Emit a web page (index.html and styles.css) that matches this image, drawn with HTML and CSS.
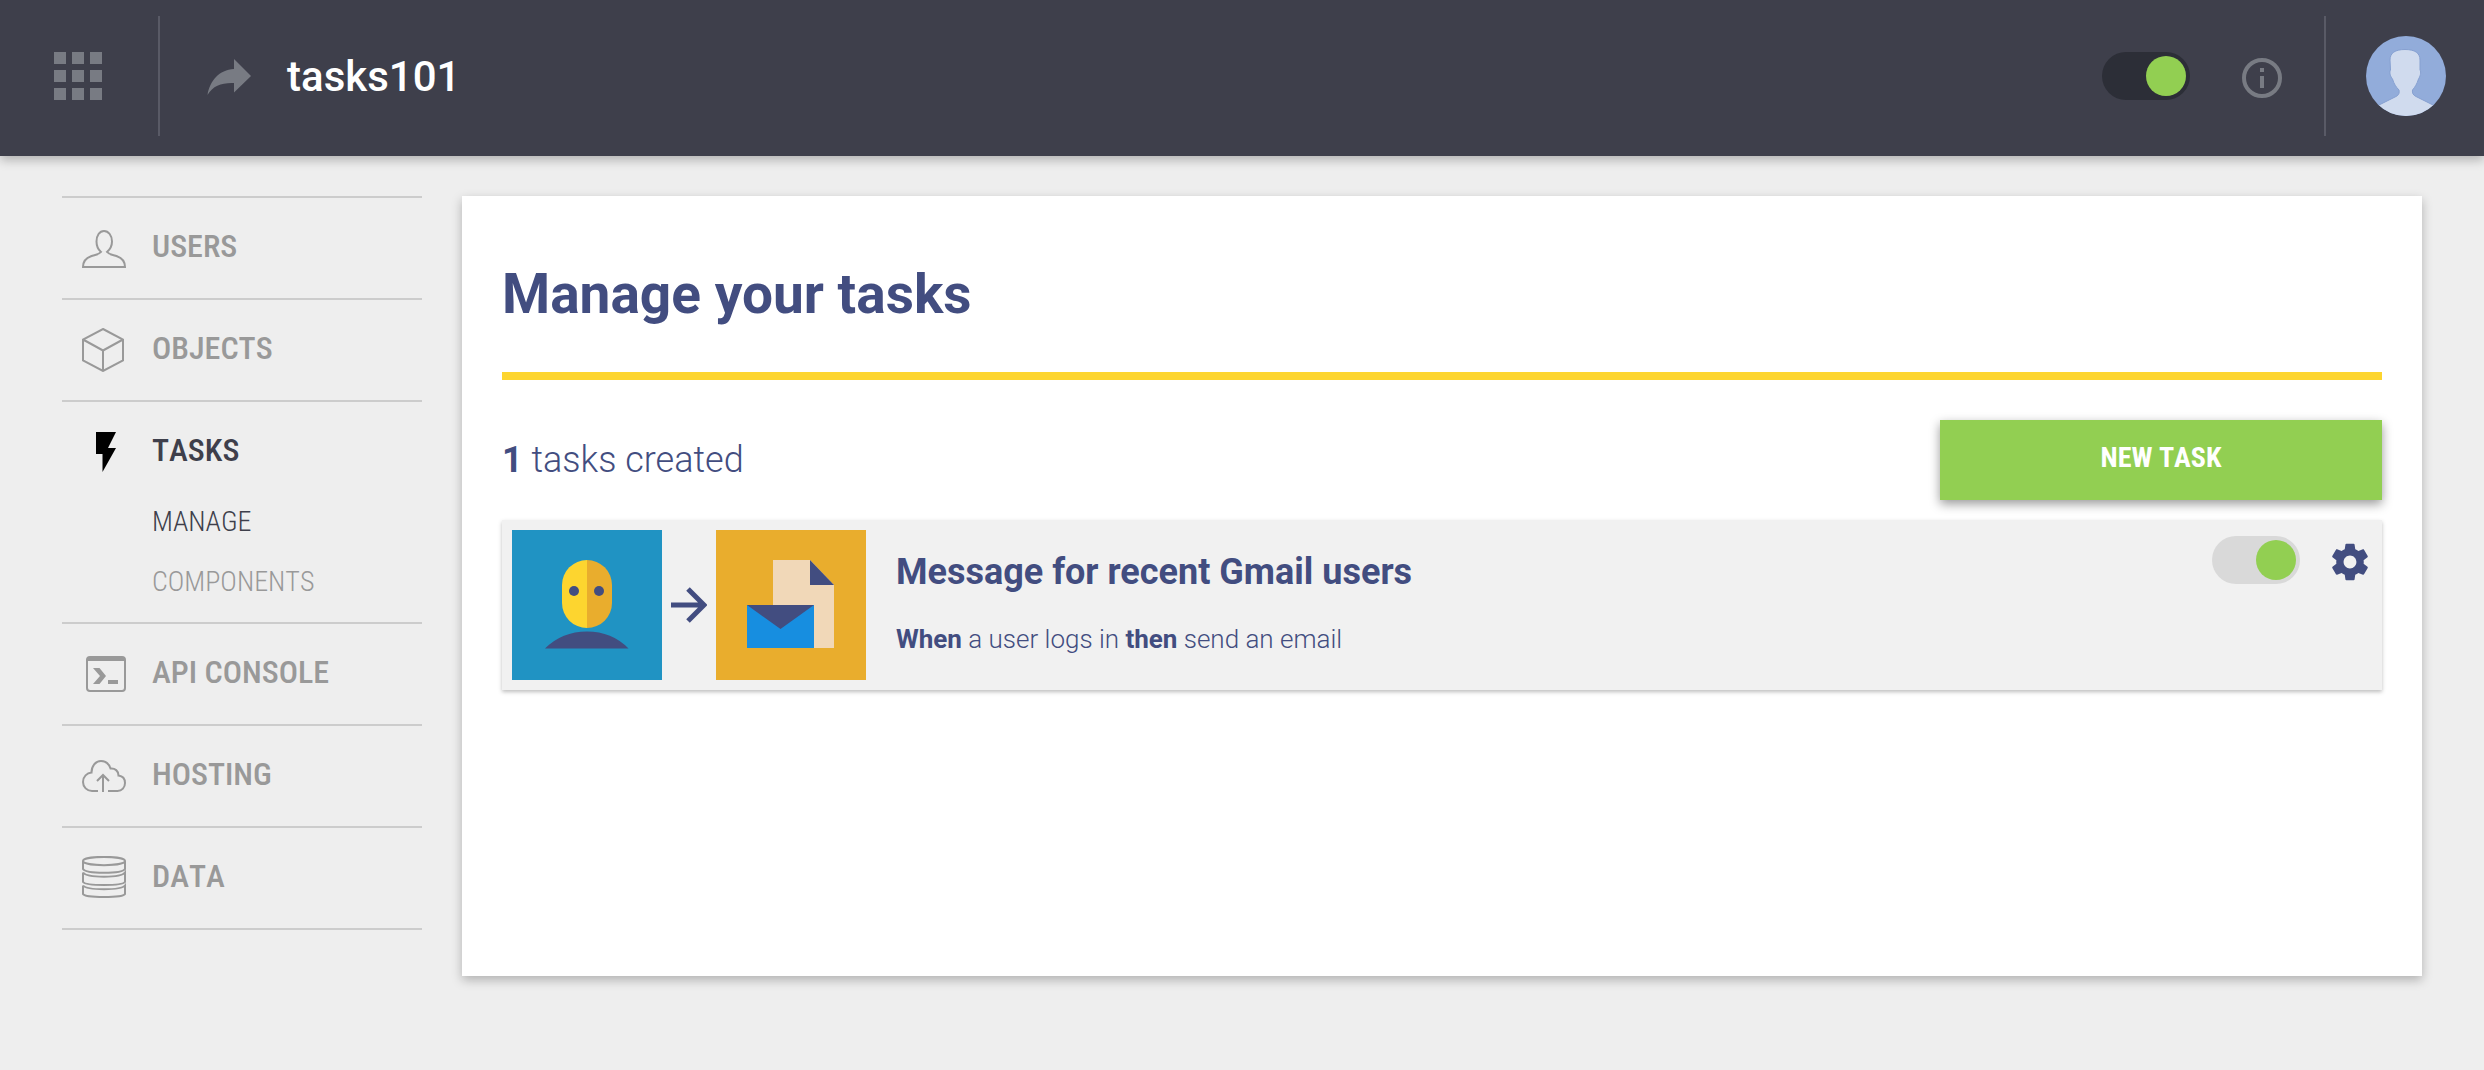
FILE: index.html
```html
<!DOCTYPE html>
<html lang="en">
<head>
<meta charset="utf-8">
<title>tasks101</title>
<meta name="viewport" content="width=device-width, initial-scale=1">
<link rel="stylesheet" href="styles.css">
</head>
<body>
<header class="topbar">
  <button class="icon-button apps" type="button" aria-label="Apps">
    <svg width="48" height="48" viewBox="0 0 48 48" fill="currentColor"><path d="M0 0h12v12H0zM18 0h12v12H18zM36 0h12v12H36zM0 18h12v12H0zM18 18h12v12H18zM36 18h12v12H36zM0 36h12v12H0zM18 36h12v12H18zM36 36h12v12H36z"/></svg>
  </button>
  <span class="divider"></span>
  <a class="share" href="#" aria-label="Open app">
    <svg width="44" height="36" viewBox="0 0 44 36" fill="currentColor"><path d="M27 0L44 17L27 33.500V24C15 23.500 6 26.500 0.500 36C3 21.500 12 11 27 10Z"/></svg>
  </a>
  <p class="app-name">tasks101</p>
  <div class="topbar-end">
    <input class="toggle toggle-dark" type="checkbox" aria-label="App enabled" checked>
    <button class="icon-button info" type="button" aria-label="Information">
      <svg width="40" height="40" viewBox="0 0 40 40"><circle cx="20" cy="20" r="18" fill="none" stroke="currentColor" stroke-width="4"/><path fill="currentColor" d="M18 10h4v4h-4zM18 18h4v12h-4z"/></svg>
    </button>
    <span class="divider"></span>
    <a class="avatar" href="#" aria-label="Account">
      <svg width="80" height="80" viewBox="0 0 80 80"><path fill="#92acda" d="M0 0h80v80H0z"/><path fill="#d0dbee" stroke="#86a0d0" stroke-width="1" d="M24 24C24 17 29 13.500 39 13.500S54 17 54 24V34C55.500 36 54 41 52.500 43C51 48 49 51 46.500 54C46 57 47 59 50 60.500L68 69.500V82H12V69.500L30 60.500C33 59 33.500 57 33 54C30 51 28 48 26.500 43C24.500 41 23 36 24.500 34Z"/></svg>
    </a>
  </div>
</header>

<div class="layout">
  <nav class="sidebar" aria-label="Main">
    <ul class="menu">
      <li class="menu-item">
        <a class="menu-link" href="#"><svg class="menu-icon" viewBox="0 0 44 44"><path d="M1 41C1 35 4 32 9 30.200C13 28.800 17 28.500 19 26C15.500 23 14.500 19 14.500 15.500C14.500 9.500 17.500 5 22 5S30 9.500 30 15.500C30 19 28.500 23 25 26C27 28.500 31 28.800 35 30.200C40 32 43 35 43 41Z"/></svg><span class="menu-label">USERS</span></a>
      </li>
      <li class="menu-item">
        <a class="menu-link" href="#"><svg class="menu-icon" viewBox="0 0 44 44"><path d="M21 1L41 11.500V32.500L21 43L1 32.500V11.500ZM1 11.500L21 22.500L41 11.500M21 22.500V43"/></svg><span class="menu-label">OBJECTS</span></a>
      </li>
      <li class="menu-item">
        <a class="menu-link is-active" href="#"><svg class="menu-icon" viewBox="0 0 44 44"><path fill="#000" stroke="none" d="M14 2H34L26 18H34L20.500 42V24H14Z"/></svg><span class="menu-label">TASKS</span></a>
        <ul class="submenu">
          <li><a class="submenu-link is-active" href="#">MANAGE</a></li>
          <li><a class="submenu-link" href="#">COMPONENTS</a></li>
        </ul>
      </li>
      <li class="menu-item">
        <a class="menu-link" href="#"><svg class="menu-icon" viewBox="0 0 44 44"><rect x="5" y="5" width="38" height="34" rx="3"/><path fill="currentColor" stroke="none" d="M5 5H43V9H5ZM11 16H17.500L24 24L17.500 32H11L18 24ZM26 28H36V32H26Z"/></svg><span class="menu-label">API CONSOLE</span></a>
      </li>
      <li class="menu-item">
        <a class="menu-link" href="#"><svg class="menu-icon" viewBox="0 0 44 44"><path d="M16 37H10C5 37 1 33 1 28C1 22.500 5 19 9.500 18.500C9.500 12 13.500 7 19 7C23.500 7 27 10 28.500 14.500C33 14 36.500 17 36.500 21.500C40.500 22 43 25 43 29C43 33.500 40 37 35.500 37H26M21 38V21M15 27L21 21L27 27"/></svg><span class="menu-label">HOSTING</span></a>
      </li>
      <li class="menu-item">
        <a class="menu-link" href="#"><svg class="menu-icon" viewBox="0 0 44 44"><path d="M1 5C1 -.5 43 -.5 43 5S1 10.500 1 5V13C4 18 40 18 43 13V5M1 16.500V26C4 30 40 30 43 26V16.500C39 22 5 22 1 16.500M1 29.500V38C3 42 41 42 43 38V29.500C39 34.500 5 34.500 1 29.500"/></svg><span class="menu-label">DATA</span></a>
      </li>
    </ul>
  </nav>

  <main class="panel">
    <h1 class="panel-title">Manage your tasks</h1>
    <div class="toolbar">
      <p class="count"><strong>1</strong> tasks created</p>
      <button class="new-task" type="button">NEW TASK</button>
    </div>
    <article class="task">
      <div class="flow">
        <svg width="150" height="150" viewBox="0 0 150 150"><path fill="#2093c3" d="M0 0h150v150H0z"/><path fill="#fdd52f" d="M75 30A25 25 0 0 0 50 55V73A25 25 0 0 0 75 98Z"/><path fill="#e9ad2d" d="M75 30A25 25 0 0 1 100 55V73A25 25 0 0 1 75 98Z"/><circle cx="62" cy="61" r="5" fill="#424d80"/><circle cx="87" cy="61" r="5" fill="#424d80"/><path fill="#424d80" d="M33 118.500Q50 101.500 75 101.500T116.500 118.500Z"/></svg>
        <svg width="36" height="36" viewBox="0 0 36 36" fill="none" stroke="#424d80" stroke-width="5"><path d="M0 18H32M17 2L33 18L17 34"/></svg>
        <svg width="150" height="150" viewBox="0 0 150 150"><path fill="#e9ad2d" d="M0 0h150v150H0z"/><path fill="#f1d8b8" d="M57 30H94L118 55V118H57Z"/><path fill="#424d80" d="M94 30L118 55H94Z"/><path fill="#178ee0" d="M31 75H98V118H31Z"/><path fill="#424d80" d="M31 75H98L64.500 99Z"/></svg>
      </div>
      <div class="task-text">
        <h2 class="task-title">Message for recent Gmail users</h2>
        <p class="task-summary"><strong>When</strong> a user logs in <strong>then</strong> send an email</p>
      </div>
      <div class="task-actions">
        <input class="toggle" type="checkbox" aria-label="Task enabled" checked>
        <button class="icon-button settings" type="button" aria-label="Task settings">
          <svg width="44" height="44" viewBox="0 0 24 24" fill="currentColor"><path d="M19.430 12.980c.04-.32.07-.64.07-.98s-.03-.66-.07-.98l2.110-1.650c.19-.15.24-.42.12-.64l-2-3.460c-.12-.22-.39-.3-.61-.22l-2.490 1c-.52-.4-1.080-.73-1.690-.98l-.38-2.650C14.460 2.180 14.250 2 14 2h-4c-.25 0-.46.18-.49.42l-.38 2.650c-.61.25-1.170.59-1.690.98l-2.490-1c-.23-.09-.49 0-.61.22l-2 3.460c-.13.22-.07.49.12.64l2.110 1.650c-.04.32-.07.65-.07.98s.03.66.07.98l-2.110 1.650c-.19.15-.24.42-.12.64l2 3.460c.12.22.39.3.61.22l2.490-1c.52.4 1.080.73 1.690.98l.38 2.650c.03.24.24.42.49.42h4c.25 0 .46-.18.49-.42l.38-2.650c.61-.25 1.170-.59 1.690-.98l2.490 1c.23.09.49 0 .61-.22l2-3.460c.12-.22.07-.49-.12-.64l-2.110-1.650zM12 15.500c-1.930 0-3.500-1.570-3.500-3.500s1.570-3.500 3.500-3.500 3.500 1.570 3.500 3.500-1.570 3.500-3.500 3.500z"/></svg>
        </button>
      </div>
    </article>
  </main>
</div>
</body>
</html>
```

FILE: styles.css
```css
:root {
  --navy: #424d80;
  --green: #92cf52;
  --slate: #3e3f4b;
  --condensed: "Roboto Condensed", Roboto, "Liberation Sans Narrow", sans-serif;
}

* {
  box-sizing: border-box;
}

body {
  margin: 0;
  background: #eee;
  color: var(--navy);
  font-family: Roboto, "Liberation Sans", sans-serif;
}

h1, h2, p, ul {
  margin: 0;
  padding: 0;
}

ul {
  list-style: none;
}

a {
  color: inherit;
  text-decoration: none;
}

svg {
  display: block;
  flex: none;
}

.icon-button {
  padding: 0;
  border: 0;
  background: none;
  color: #787b83;
  cursor: pointer;
}

/* Top bar */
.topbar {
  display: flex;
  align-items: center;
  padding: 16px 38px 20px 54px;
  background: var(--slate);
  box-shadow: 0 4px 10px rgba(0, 0, 0, 0.26);
}

.divider {
  width: 2px;
  height: 120px;
  background: #595a66;
}

.apps {
  margin-right: 56px;
}

.share {
  margin: 0 36px 0 47px;
  padding-top: 2px;
  color: #787b83;
}

.app-name {
  padding-top: 2px;
  color: #fff;
  font-size: 42px;
  font-weight: 500;
  line-height: 60px;
}

.topbar-end {
  display: flex;
  align-items: center;
  margin-left: auto;
}

.info {
  margin: 4px 42px 0 52px;
}

.avatar {
  margin-left: 40px;
  border-radius: 50%;
  overflow: hidden;
}

/* Switch */
.toggle {
  appearance: none;
  display: flex;
  width: 88px;
  height: 48px;
  margin: 0;
  padding: 4px;
  border-radius: 24px;
  background: #d9d9d9;
  cursor: pointer;
}

.toggle::before {
  content: "";
  width: 40px;
  height: 40px;
  border-radius: 50%;
  background: #999;
}

.toggle:checked::before {
  margin-left: auto;
  background: var(--green);
}

.toggle-dark {
  background: #2c2e37;
}

/* Page layout */
.layout {
  display: flex;
  align-items: flex-start;
  gap: 40px;
  padding: 40px 62px;
}

.sidebar {
  flex: none;
  width: 360px;
  font-family: var(--condensed);
  font-kerning: none;
}

.menu {
  border-top: 2px solid #ccc;
}

.menu-item {
  border-bottom: 2px solid #ccc;
}

.menu-link {
  display: flex;
  align-items: center;
  gap: 26px;
  padding: 28px 0 28px 20px;
  color: #999;
  font-size: 32px;
  font-weight: 500;
  line-height: 40px;
}

.menu-label {
  padding-bottom: 4px;
}

.menu-icon {
  width: 44px;
  height: 44px;
  fill: none;
  stroke: currentColor;
  stroke-width: 2;
}

.submenu {
  display: grid;
  gap: 20px;
  padding: 0 0 20px 90px;
}

.submenu-link {
  display: block;
  color: #999;
  font-size: 28px;
  font-weight: 300;
  line-height: 40px;
}

.menu-link.is-active,
.submenu-link.is-active {
  color: var(--slate);
}

/* Content panel */
.panel {
  flex: 1;
  min-height: 780px;
  padding: 40px;
  background: #fff;
  box-shadow: 0 4px 10px rgba(0, 0, 0, 0.26);
}

.panel-title {
  padding: 18px 0 38px;
  border-bottom: 8px solid #fdd52f;
  font-size: 55px;
  font-weight: 700;
  line-height: 80px;
}

.toolbar {
  display: flex;
  align-items: center;
  justify-content: space-between;
  margin: 40px 0 20px;
}

.count {
  font-size: 36px;
  font-weight: 300;
}

strong {
  font-weight: 700;
}

.new-task {
  width: 442px;
  height: 80px;
  padding: 0 0 6px;
  border: 0;
  background: var(--green);
  box-shadow: 0 4px 10px rgba(0, 0, 0, 0.4);
  color: #fff;
  font-family: var(--condensed);
  font-size: 28px;
  font-weight: 700;
  font-kerning: none;
  cursor: pointer;
}

/* Task row */
.task {
  display: flex;
  align-items: flex-start;
  gap: 30px;
  padding: 10px;
  background: #f1f1f1;
  box-shadow: 0 2px 4px rgba(0, 0, 0, 0.26);
}

.flow {
  display: flex;
  align-items: center;
  gap: 9px;
}

.task-text {
  flex: 1;
  padding-top: 20px;
}

.task-title {
  font-size: 36px;
  font-weight: 700;
  line-height: 44px;
}

.task-summary {
  margin-top: 25px;
  font-size: 26px;
  font-weight: 300;
  line-height: 40px;
}

.task-actions {
  display: flex;
  align-items: center;
  gap: 28px;
  padding-top: 6px;
}

.settings {
  margin-top: 4px;
  color: var(--navy);
}
```
